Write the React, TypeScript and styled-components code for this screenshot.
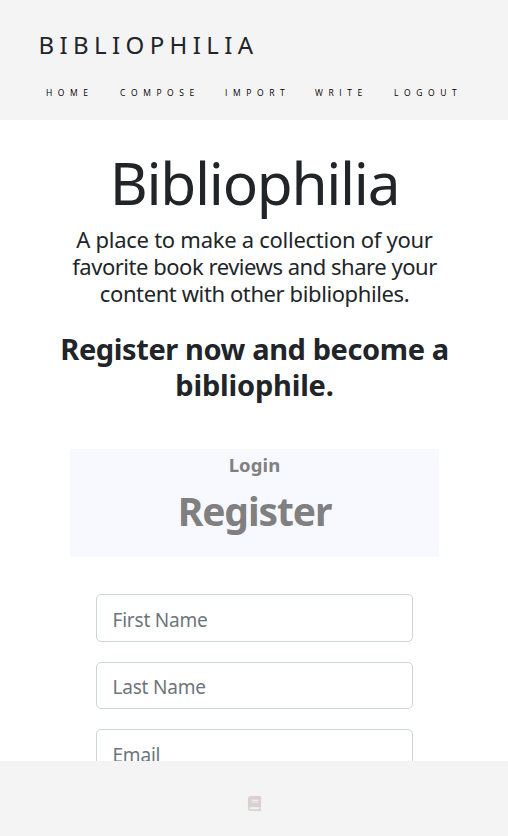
import React from 'react';
import styled, { createGlobalStyle } from 'styled-components';
import { FaBook } from 'react-icons/fa';

const GlobalStyle = createGlobalStyle`
  *, *::before, *::after { box-sizing: border-box; }
  body {
    margin: 0;
    background: #fff;
    color: #212529;
    font-family: 'Noto Sans', 'Open Sans', sans-serif;
    overflow: hidden;
  }
  h1, h2, h3, h4, p { margin: 0; }
`;

const Page = styled.div`
  display: grid;
  grid-template-rows: 120px minmax(0, 1fr) 75px;
  height: 100vh;
`;

const Header = styled.header`
  background: #f4f4f4;
  padding-top: 27px;
`;

const Brand = styled.div`
  padding-left: 38.5px;
  font-size: 24px;
  line-height: 36px;
  letter-spacing: 5.4px;
  white-space: nowrap;
`;

const Nav = styled.nav`
  display: flex;
  padding: 24px 0 0 46px;
`;

const NavLink = styled.a<{ $width: number }>`
  flex: 0 0 ${(p) => p.$width}px;
  color: #000;
  font-family: 'Open Sans', sans-serif;
  font-size: 8.5px;
  line-height: 12px;
  letter-spacing: 5.6px;
  text-decoration: none;
  white-space: nowrap;
`;

const Main = styled.main`
  overflow: hidden;
  text-align: center;
`;

const Title = styled.h1`
  padding: 26px 0 0 1px;
  font-size: 58.5px;
  font-weight: 400;
  line-height: 72px;
  letter-spacing: -1.3px;
`;

const Lead = styled.p`
  padding: 8px 0 0 1px;
  font-size: 22px;
  line-height: 27px;
`;

const Callout = styled.h3`
  padding: 24px 0 0 1px;
  font-size: 29px;
  font-weight: 700;
  line-height: 36px;
`;

const Line = styled.span<{ $track: number }>`
  display: block;
  letter-spacing: ${(p) => p.$track}px;
  white-space: nowrap;
`;

const Switcher = styled.section`
  width: 369px;
  height: 108px;
  margin: 46px 69px 0 70px;
  background: #f8f9ff;
  color: #808080;
  font-weight: 700;
`;

const LoginTab = styled.h4`
  padding-top: 3px;
  font-size: 18.5px;
  line-height: 25px;
  letter-spacing: 0.1px;
`;

const RegisterTab = styled.h2`
  padding-top: 10px;
  font-size: 39px;
  line-height: 48px;
  letter-spacing: -1.1px;
`;

const Form = styled.form`
  display: flex;
  flex-direction: column;
  gap: 20px;
  width: 317px;
  margin: 37px 0 0 96px;
`;

const Field = styled.input`
  width: 100%;
  height: 47.5px;
  padding: 4px 15px 0 15.5px;
  border: 1px solid #ced4da;
  border-radius: 5px;
  background: #fff;
  color: #495057;
  font: 400 19px 'Noto Sans', 'Open Sans', sans-serif;
  letter-spacing: -0.2px;
  outline: none;
  &::placeholder { color: #6c757d; opacity: 1; }
`;

const Footer = styled.footer`
  display: flex;
  justify-content: center;
  padding-top: 35px;
  background: #f4f4f4;
  color: #dcd1d1;
  font-size: 15px;
`;

const links = [
  { label: 'HOME', width: 74 },
  { label: 'COMPOSE', width: 105 },
  { label: 'IMPORT', width: 90 },
  { label: 'WRITE', width: 79 },
  { label: 'LOGOUT', width: 80 },
];

const fields = ['First Name', 'Last Name', 'Email'];

export default function App() {
  return (
    <>
      <GlobalStyle />
      <Page>
        <Header>
          <Brand>BIBLIOPHILIA</Brand>
          <Nav>
            {links.map((l) => (
              <NavLink key={l.label} $width={l.width}>{l.label}</NavLink>
            ))}
          </Nav>
        </Header>
        <Main>
          <Title>Bibliophilia</Title>
          <Lead>
            <Line $track={-0.27}>A place to make a collection of your</Line>
            <Line $track={-0.47}>favorite book reviews and share your</Line>
            <Line $track={-0.4}>content with other bibliophiles.</Line>
          </Lead>
          <Callout>
            <Line $track={-0.4}>Register now and become a</Line>
            <Line $track={-0.2}>bibliophile.</Line>
          </Callout>
          <Switcher>
            <LoginTab>Login</LoginTab>
            <RegisterTab>Register</RegisterTab>
          </Switcher>
          <Form>
            {fields.map((label) => (
              <Field key={label} placeholder={label} />
            ))}
          </Form>
        </Main>
        <Footer><FaBook /></Footer>
      </Page>
    </>
  );
}
